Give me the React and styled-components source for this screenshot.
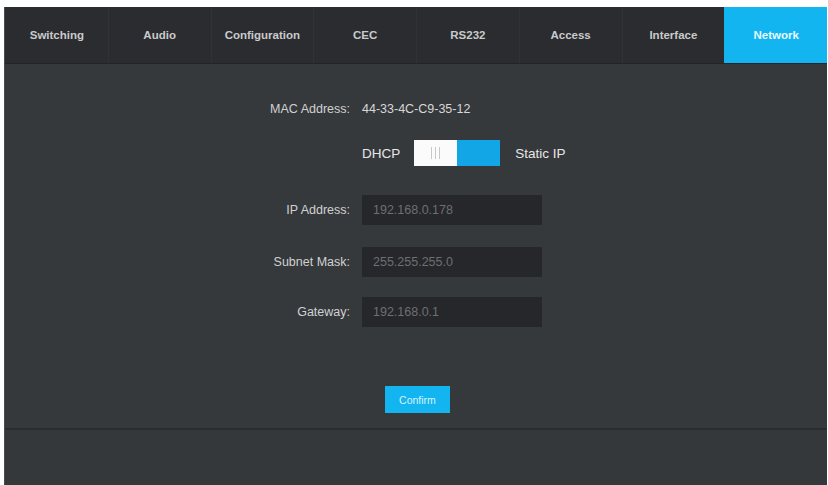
import React, { useState } from "react";
import styled, { createGlobalStyle } from "styled-components";

const GlobalStyle = createGlobalStyle`
  html, body {
    margin: 0;
    padding: 0;
    background: #fff;
  }
  body {
    font-family: "Liberation Sans", Arial, sans-serif;
  }
`;

const Frame = styled.div`
  width: 822px;
  height: 478px;
  margin: 7px 2px 0 4px;
  background: #36393c;
  display: flex;
  flex-direction: column;
  border-left: 1px solid #4a4c4f;
`;

const Nav = styled.nav`
  display: grid;
  grid-template-columns: repeat(8, 1fr);
  height: 56px;
  background: #2a2c2f;
  border-bottom: 1px solid #222427;
`;

const Tab = styled.div`
  display: flex;
  align-items: center;
  justify-content: center;
  font-size: 11.5px;
  font-weight: bold;
  color: ${(p) => (p.active ? "#e8f8ff" : "#c9cacb")};
  background: ${(p) => (p.active ? "#12b5f0" : "transparent")};
  border-left: 1px solid ${(p) => (p.first || p.active ? "transparent" : "#303235")};
`;

const Body = styled.main`
  height: 366px;
  box-sizing: border-box;
  padding: 38px 0 0 245px;
  border-bottom: 2px solid #2b2d30;
`;

const Row = styled.div`
  display: grid;
  grid-template-columns: 100px 180px;
  column-gap: 12px;
  align-items: center;
  margin-top: ${(p) => p.mt || 0}px;
`;

const Label = styled.span`
  text-align: right;
  font-size: 12.5px;
  line-height: 15px;
  color: #d0d1d2;
`;

const Value = styled.span`
  font-size: 12.5px;
  line-height: 15px;
  color: #d6d7d8;
`;

const Switch = styled.div`
  display: flex;
  align-items: center;
  width: max-content;
  font-size: 13.5px;
  color: #e6e6e6;
  white-space: nowrap;
`;

const Toggle = styled.div`
  display: flex;
  flex-shrink: 0;
  width: 86px;
  height: 26px;
  margin: 0 15px 0 14px;
  cursor: pointer;
`;

const Half = styled.div`
  flex: 1;
  display: flex;
  align-items: center;
  justify-content: center;
  background: ${(p) => (p.on ? "#12a6e6" : "#fbfbfb")};
`;

const Grip = styled.span`
  width: 9px;
  height: 12px;
  border-left: 1px solid #c8c8c8;
  border-right: 1px solid #c8c8c8;
  box-sizing: border-box;
  position: relative;
  &::after {
    content: "";
    position: absolute;
    left: 3px;
    top: 0;
    width: 1px;
    height: 12px;
    background: #c8c8c8;
  }
`;

const Input = styled.input`
  height: 30px;
  box-sizing: border-box;
  border: none;
  outline: none;
  background: #25272a;
  color: #6d6f72;
  font-family: "Liberation Sans", Arial, sans-serif;
  font-size: 12.5px;
  padding: 0 11px;
`;

const ConfirmBtn = styled.button`
  margin-left: 23px;
  width: 65px;
  height: 27px;
  border: none;
  background: #12b5f0;
  color: #d8f2fc;
  font-family: "Liberation Sans", Arial, sans-serif;
  font-size: 10.5px;
  cursor: pointer;
`;

const Footer = styled.div`
  flex: 1;
  background: #35383b;
`;

const tabs = [
  "Switching",
  "Audio",
  "Configuration",
  "CEC",
  "RS232",
  "Access",
  "Interface",
  "Network",
];

const fields = [
  ["IP Address:", "192.168.0.178", 29],
  ["Subnet Mask:", "255.255.255.0", 22],
  ["Gateway:", "192.168.0.1", 20],
];

export default function App() {
  const [staticIp, setStaticIp] = useState(true);
  return (
    <>
      <GlobalStyle />
      <Frame>
        <Nav>
          {tabs.map((t, i) => (
            <Tab key={t} first={i === 0} active={t === "Network"}>
              {t}
            </Tab>
          ))}
        </Nav>
        <Body>
          <Row>
            <Label>MAC Address:</Label>
            <Value>44-33-4C-C9-35-12</Value>
          </Row>
          <Row mt={23}>
            <span />
            <Switch>
              DHCP
              <Toggle onClick={() => setStaticIp(!staticIp)}>
                <Half on={!staticIp}>{staticIp && <Grip />}</Half>
                <Half on={staticIp}>{!staticIp && <Grip />}</Half>
              </Toggle>
              Static IP
            </Switch>
          </Row>
          {fields.map(([label, value, mt]) => (
            <Row key={label} mt={mt}>
              <Label>{label}</Label>
              <Input defaultValue={value} />
            </Row>
          ))}
          <Row mt={59}>
            <span />
            <div>
              <ConfirmBtn>Confirm</ConfirmBtn>
            </div>
          </Row>
        </Body>
        <Footer />
      </Frame>
    </>
  );
}
